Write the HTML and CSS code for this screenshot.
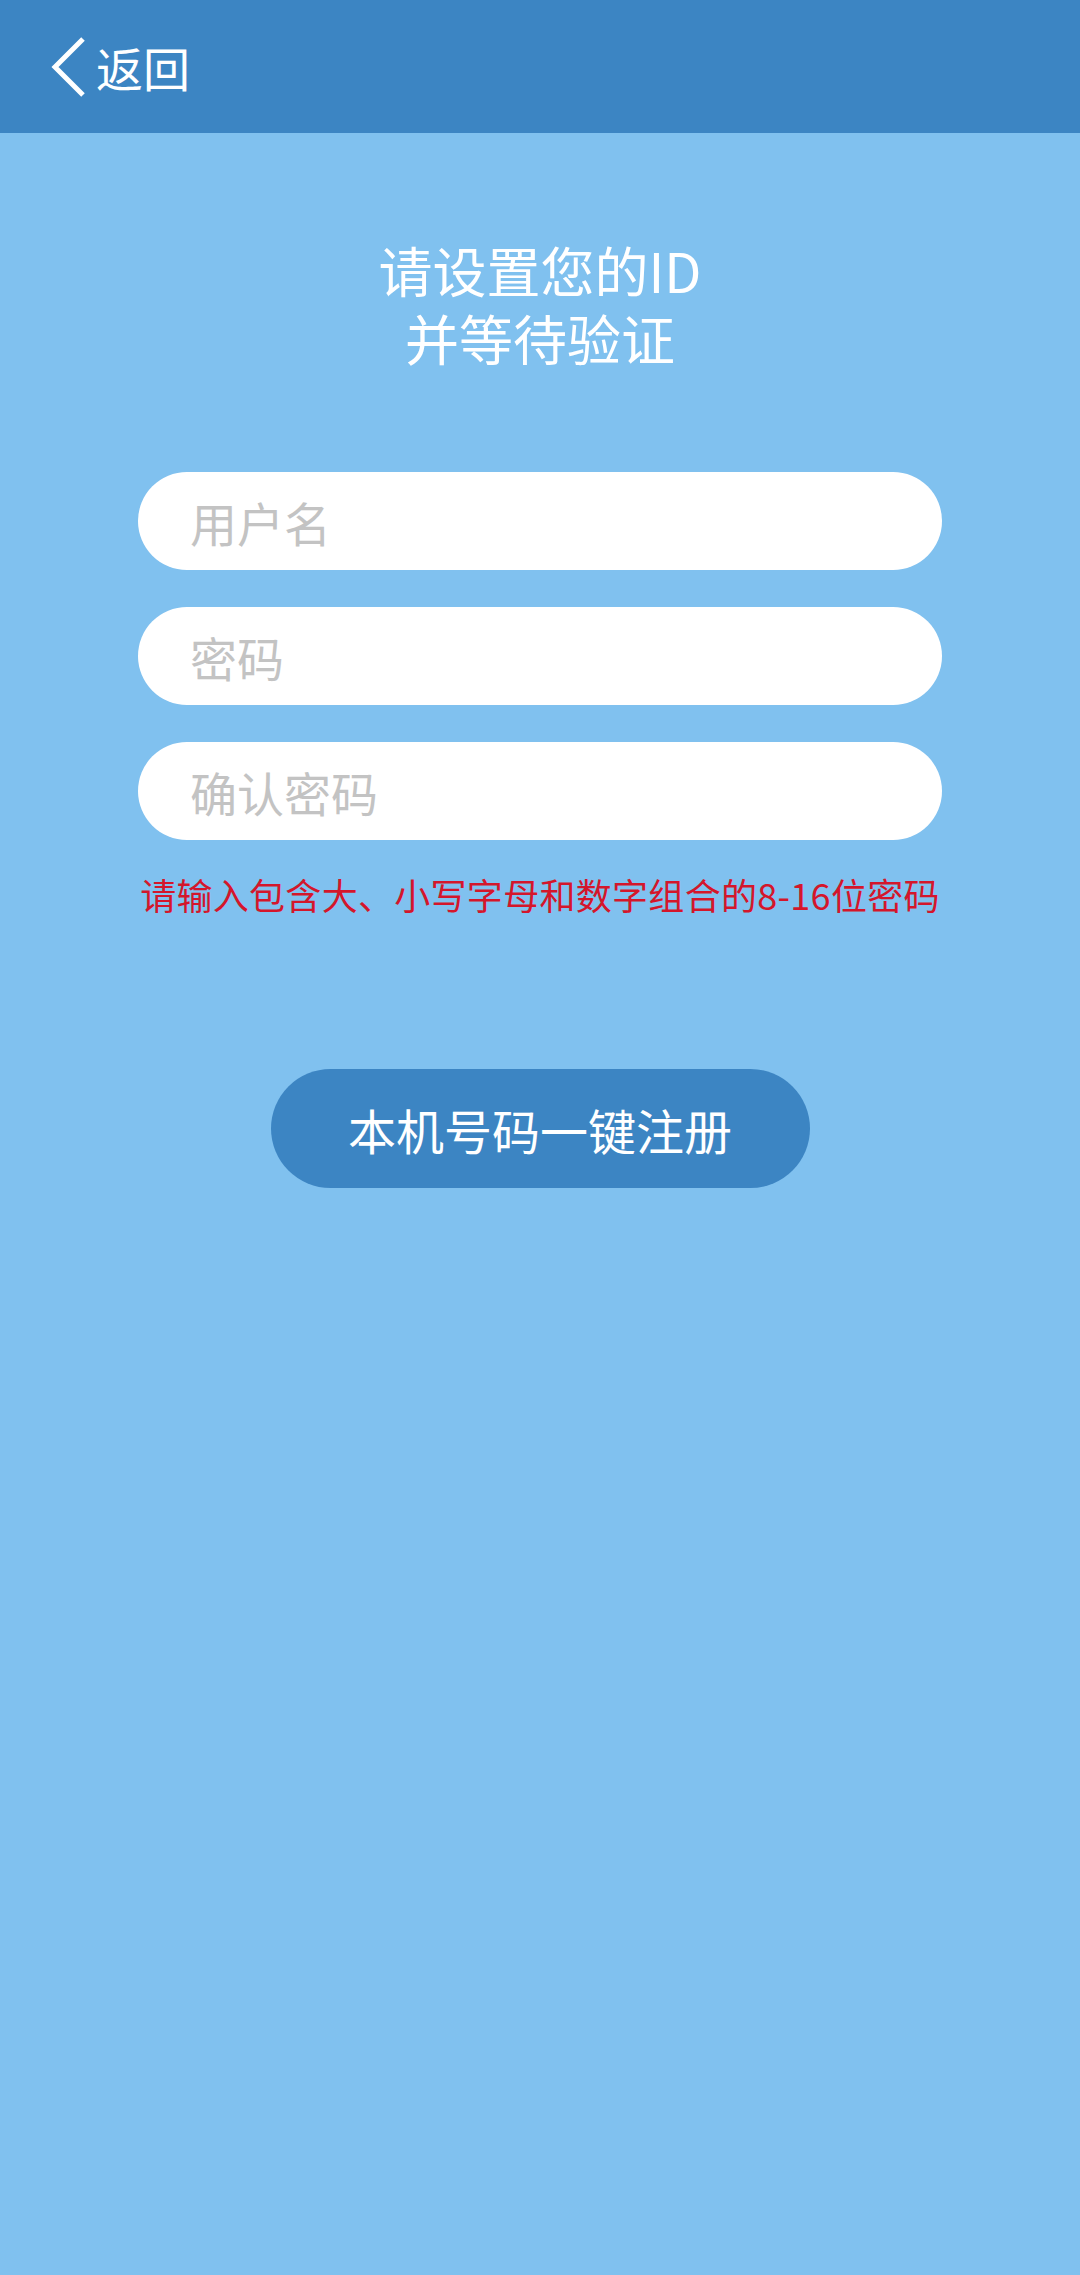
FILE: index.html
```html
<!DOCTYPE html>
<html lang="zh-CN">
<head>
<meta charset="utf-8">
<title>注册</title>
<link rel="stylesheet" href="styles.css">
</head>
<body>
<header class="topbar">
  <a class="back" href="#">
    <svg class="back-icon" width="36" height="62" viewBox="0 0 36 62" aria-hidden="true">
      <path d="M32 3 L4 31 L32 59" fill="none" stroke="#ffffff" stroke-width="5" stroke-linejoin="miter"/>
    </svg>
    <span class="back-text">返回</span>
  </a>
</header>
<main class="content">
  <h1 class="title"><span class="title-line">请设置您的ID</span><span class="title-line">并等待验证</span></h1>
  <form class="form">
    <input class="field" type="text" placeholder="用户名">
    <input class="field" type="password" placeholder="密码">
    <input class="field" type="password" placeholder="确认密码">
  </form>
  <p class="hint">请输入包含大、小写字母和数字组合的8-16位密码</p>
  <button class="register" type="button">本机号码一键注册</button>
</main>
</body>
</html>
```
FILE: styles.css
```css
html, body {
  margin: 0;
  padding: 0;
}
body {
  background: #80c1ef;
  min-height: 2275px;
  font-family: "Noto Sans CJK SC", "Noto Sans", sans-serif;
}
.topbar {
  height: 133px;
  background: #3c85c3;
  display: flex;
  align-items: center;
  padding-left: 51px;
  box-sizing: border-box;
}
.back {
  display: flex;
  align-items: center;
  gap: 9px;
  color: #ffffff;
  text-decoration: none;
}
.back-icon {
  display: block;
}
.back-text {
  font-size: 47px;
  line-height: 1;
}
.content {
  display: flex;
  flex-direction: column;
  align-items: center;
}
.title {
  margin: 103px 0 0;
  color: #ffffff;
  font-size: 54px;
  font-weight: 400;
  line-height: 68px;
  text-align: center;
  display: flex;
  flex-direction: column;
}
.title-line {
  display: block;
  height: 68px;
}
.form {
  margin-top: 100px;
  display: flex;
  flex-direction: column;
  gap: 37px;
  width: 804px;
}
.field {
  appearance: none;
  -webkit-appearance: none;
  border: none;
  outline: none;
  height: 98px;
  border-radius: 49px;
  background: #ffffff;
  padding: 0 52px;
  box-sizing: border-box;
  font-family: "Noto Sans CJK SC", "Noto Sans", sans-serif;
  font-size: 47px;
  color: #333333;
}
.field::placeholder {
  color: #c3c3c3;
}
.hint {
  margin: 33px 0 0;
  color: #d4162b;
  font-size: 36px;
  line-height: 42px;
  text-align: center;
  letter-spacing: 0.3px;
}
.register {
  margin-top: 154px;
  width: 539px;
  height: 119px;
  border: none;
  border-radius: 60px;
  background: #3c85c3;
  color: #ffffff;
  font-family: "Noto Sans CJK SC", "Noto Sans", sans-serif;
  font-size: 48px;
  cursor: pointer;
}
```
